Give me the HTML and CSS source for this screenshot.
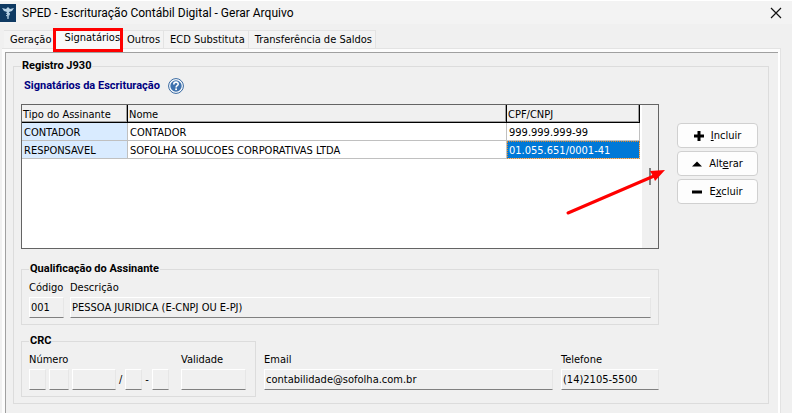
FILE: index.html
```
<!DOCTYPE html>
<html lang="pt-BR">
<head>
  <meta charset="UTF-8" />
  <meta name="viewport" content="width=device-width, initial-scale=1.0" />
  <title>SPED - Escrituração Contábil Digital - Gerar Arquivo</title>
  <link rel="stylesheet" href="styles.css">
</head>
<body>
  <header class="titlebar">
    <svg class="app-icon" viewBox="0 0 16 18" aria-hidden="true">
      <rect width="16" height="18" fill="#0f3a63" />
      <path d="M2 4 L6 5 L8 3 L10 5 L14 4 L12 7 L9 8 L8.6 15 L7.4 15 L7 8 L4 7 Z" fill="#b9d3e6" />
      <path d="M6 9 L10 11 M10 9 L6 12" stroke="#b9d3e6" stroke-width="1" />
    </svg>
    <h1 class="title">SPED - Escrituração Contábil Digital - Gerar Arquivo</h1>
    <button class="close" type="button" aria-label="Fechar">
      <svg viewBox="0 0 12 12"><path d="M1 1 L11 11 M11 1 L1 11" stroke="#111" stroke-width="1.2" /></svg>
    </button>
  </header>

  <nav class="tabs" role="tablist">
    <button class="tab" type="button" role="tab">Geração</button>
    <button class="tab active" type="button" role="tab" aria-selected="true">Signatários</button>
    <button class="tab" type="button" role="tab">Outros</button>
    <button class="tab" type="button" role="tab">ECD Substituta</button>
    <button class="tab" type="button" role="tab">Transferência de Saldos</button>
  </nav>

  <main class="page">
    <fieldset class="group registro">
      <legend>Registro J930</legend>

      <div class="heading">
        <h2>Signatários da Escrituração</h2>
        <button class="help" type="button" aria-label="Ajuda">
          <svg viewBox="0 0 16 16">
            <circle cx="8" cy="8" r="7.4" fill="#fff" stroke="#33659f" stroke-width="1" />
            <circle cx="8" cy="8" r="5.7" fill="#3f72ae" />
            <path d="M5.8 6.4 C5.8 3.4 10.3 3.5 10.2 6.2 C10.1 7.7 8.1 7.7 8.1 9.4" fill="none" stroke="#fff" stroke-width="1.6" />
            <rect x="7.2" y="10.4" width="1.8" height="1.7" fill="#fff" />
          </svg>
        </button>
      </div>

      <div class="columns">
        <div class="content">
          <div class="grid">
            <table>
              <colgroup><col class="c-tipo"><col><col class="c-doc"></colgroup>
              <thead>
                <tr><th>Tipo do Assinante</th><th>Nome</th><th>CPF/CNPJ</th></tr>
              </thead>
              <tbody>
                <tr><td class="fixed">CONTADOR</td><td>CONTADOR</td><td>999.999.999-99</td></tr>
                <tr><td class="fixed">RESPONSAVEL</td><td>SOFOLHA SOLUCOES CORPORATIVAS LTDA</td><td class="selected">01.055.651/0001-41</td></tr>
              </tbody>
            </table>
            <div class="scroll"></div>
            <svg class="arrow" viewBox="0 0 100 48" aria-hidden="true">
              <path d="M84 1 V18" stroke="#808080" stroke-width="2" />
              <path d="M2 46 L88 9" stroke="#f00" stroke-width="3" stroke-linecap="round" />
              <path d="M99 3 L84 4 L87 9 L89 14 Z" fill="#f00" />
            </svg>
          </div>

          <fieldset class="group qualificacao">
            <legend>Qualificação do Assinante</legend>
            <div class="fields">
              <div class="field codigo">
                <label for="codigo">Código</label>
                <input id="codigo" type="text" value="001" readonly>
              </div>
              <div class="field grow">
                <label for="descricao">Descrição</label>
                <input id="descricao" type="text" value="PESSOA JURIDICA (E-CNPJ OU E-PJ)" readonly>
              </div>
            </div>
          </fieldset>

          <div class="bottom">
            <fieldset class="group crc">
              <legend>CRC</legend>
              <div class="fields">
                <div class="field grow">
                  <label for="numero">Número</label>
                  <div class="numero">
                    <input id="numero" class="w-tipo" type="text" readonly>
                    <input class="w-uf" type="text" aria-label="UF" readonly>
                    <input class="w-num" type="text" aria-label="Registro" readonly>
                    <span>/</span>
                    <input class="w-tipo" type="text" aria-label="Tipo" readonly>
                    <span>-</span>
                    <input class="w-tipo" type="text" aria-label="Dígito" readonly>
                  </div>
                </div>
                <div class="field validade">
                  <label for="validade">Validade</label>
                  <input id="validade" type="text" readonly>
                </div>
              </div>
            </fieldset>
            <div class="field grow">
              <label for="email">Email</label>
              <input id="email" type="text" value="contabilidade@sofolha.com.br" readonly>
            </div>
            <div class="field telefone">
              <label for="telefone">Telefone</label>
              <input id="telefone" type="text" value="(14)2105-5500" readonly>
            </div>
          </div>
        </div>

        <div class="actions">
          <button type="button">
            <svg viewBox="0 0 10 10"><path d="M5 0 V10 M0 5 H10" stroke="#000" stroke-width="3" /></svg>
            <span><u>I</u>ncluir</span>
          </button>
          <button type="button">
            <svg viewBox="0 0 10 10"><path d="M0 7.5 L5 2.5 L10 7.5 Z" /></svg>
            <span>Alt<u>e</u>rar</span>
          </button>
          <button type="button">
            <svg viewBox="0 0 10 10"><path d="M0 5 H10" stroke="#000" stroke-width="3" /></svg>
            <span>E<u>x</u>cluir</span>
          </button>
        </div>
      </div>
    </fieldset>
  </main>
</body>
</html>
```

FILE: styles.css
```
* {
  box-sizing: border-box;
}

body {
  margin: 0;
  min-height: 100vh;
  display: flex;
  flex-direction: column;
  background: #f0f0f0;
  color: #000;
  font-family: "DejaVu Sans Condensed", "DejaVu Sans", sans-serif;
  font-size: 11px;
  line-height: 14px;
  overflow: hidden;
}

button, input {
  font: inherit;
  color: inherit;
}

button {
  padding: 0;
  border: 0;
  background: none;
}

.titlebar {
  display: flex;
  align-items: center;
  gap: 6px;
  height: 24px;
  padding-right: 10px;
  background: #f3f3f3;
  border-top: 1px solid #fff;
}

.app-icon {
  width: 16px;
  height: 18px;
}

.title {
  flex: 1;
  margin: 0;
  font-family: Roboto, sans-serif;
  font-size: 12px;
  font-weight: normal;
}

.close svg {
  display: block;
  width: 12px;
  height: 12px;
}

/* abas */
.tabs {
  display: flex;
  align-items: flex-end;
  height: 24px;
  padding-left: 4px;
}

.tab {
  height: 18px;
  padding: 0 3px 0 6px;
  background: #f3f3f3;
  border: 1px solid #e3e3e3;
  border-bottom: 0;
  border-left: 0;
  white-space: nowrap;
}

.tab.active {
  position: relative;
  z-index: 1;
  height: 24px;
  margin: 0 -2px -4px -2px;
  padding: 0 0 4px 8px;
  background: #f9f9f9;
  border: 3px solid #f00;
}

.page {
  flex: 1;
  margin: 0 11px 0 2px;
  padding: 6px 11px 9px 7px;
  border: 1px solid #e3e3e3;
  border-width: 1px 1px 0 0;
  box-shadow: inset 3px 3px #fcfcfc, inset -2px 0 #fff, inset 4px 4px #a0a0a0;
}

.group {
  min-width: 0;
  margin: 0;
  border: 1px solid #dcdcdc;
}

.group legend {
  margin: 0;
  padding: 0 1px;
  font-family: Roboto, sans-serif;
  font-weight: bold;
}

.registro {
  margin: 4px 0 0 4px;
  padding: 4px 10px 6px 7px;
}

.heading {
  display: flex;
  align-items: center;
  gap: 8px;
  height: 18px;
  margin-bottom: 9px;
  padding-left: 3px;
}

.heading h2 {
  margin: 0;
  font-family: Roboto, sans-serif;
  font-size: 11px;
  color: #000080;
}

.help svg {
  display: block;
  width: 16px;
  height: 16px;
}

.columns {
  display: flex;
  gap: 18px;
}

.content {
  flex: 1;
  min-width: 0;
}

/* tabela de signatários */
.grid {
  position: relative;
  display: flex;
  align-items: flex-start;
  height: 145px;
  background: #fff;
  border: 1px solid #646464;
}

.grid table {
  flex: 1;
  margin-right: 2px;
  border-collapse: separate;
  border-spacing: 0;
  table-layout: fixed;
}

.c-tipo {
  width: 106px;
}

.c-doc {
  width: 133px;
}

.grid th,
.grid td {
  height: 18px;
  padding: 2px 2px 0;
  border-right: 1px solid #c0c0c0;
  border-bottom: 1px solid #c0c0c0;
  font-weight: normal;
  text-align: left;
  white-space: nowrap;
}

.grid th {
  padding: 2px 1px 0;
  background: #f0f0f0;
  border-color: #000;
  box-shadow: inset -1px -1px #a0a0a0;
}

.grid .fixed {
  background: #d9ebff;
}

.grid .selected {
  background: #0078d7;
  color: #fff;
  outline: 1px dotted #e08728;
  outline-offset: -1px;
}

.scroll {
  align-self: stretch;
  width: 16px;
  background: #f0f0f0;
}

.arrow {
  position: absolute;
  right: -8px;
  bottom: 33px;
  width: 100px;
  height: 48px;
}

.qualificacao {
  margin-top: 13px;
  padding: 4px 7px 6px 7px;
}

.qualificacao legend,
.crc legend {
  margin-bottom: 1px;
}

.fields {
  display: flex;
  gap: 6px;
}

.field {
  display: flex;
  flex-direction: column;
  gap: 2px;
}

.grow {
  flex: 1;
  min-width: 0;
}

.codigo {
  width: 35px;
}

.field input {
  width: 100%;
  min-width: 0;
  height: 21px;
  padding: 0 1px;
  background: #f0f0f0;
  border: 1px solid #fff;
  border-right-color: #e6e6e6;
  border-bottom-color: #808080;
  border-radius: 0;
  outline: none;
}

.bottom {
  display: flex;
  align-items: flex-end;
  gap: 8px;
  margin-top: 9px;
}

.crc {
  width: 235px;
  padding: 4px 9px 6px 7px;
}

.bottom > .field {
  margin-bottom: 7px;
}

.numero {
  display: flex;
  align-items: center;
  gap: 3px;
}

.numero .w-tipo {
  width: 17px;
}

.numero .w-uf {
  width: 20px;
}

.numero .w-num {
  width: 44px;
}

.validade {
  width: 65px;
}

.telefone {
  width: 98px;
}

.actions {
  display: flex;
  flex-direction: column;
  gap: 3px;
  width: 81px;
  padding-top: 19px;
}

.actions button {
  display: flex;
  align-items: center;
  justify-content: center;
  gap: 7px;
  height: 25px;
  background: #fdfdfd;
  border: 1px solid #d0d0d0;
  border-radius: 4px;
}

.actions svg {
  width: 10px;
  height: 10px;
}
```
